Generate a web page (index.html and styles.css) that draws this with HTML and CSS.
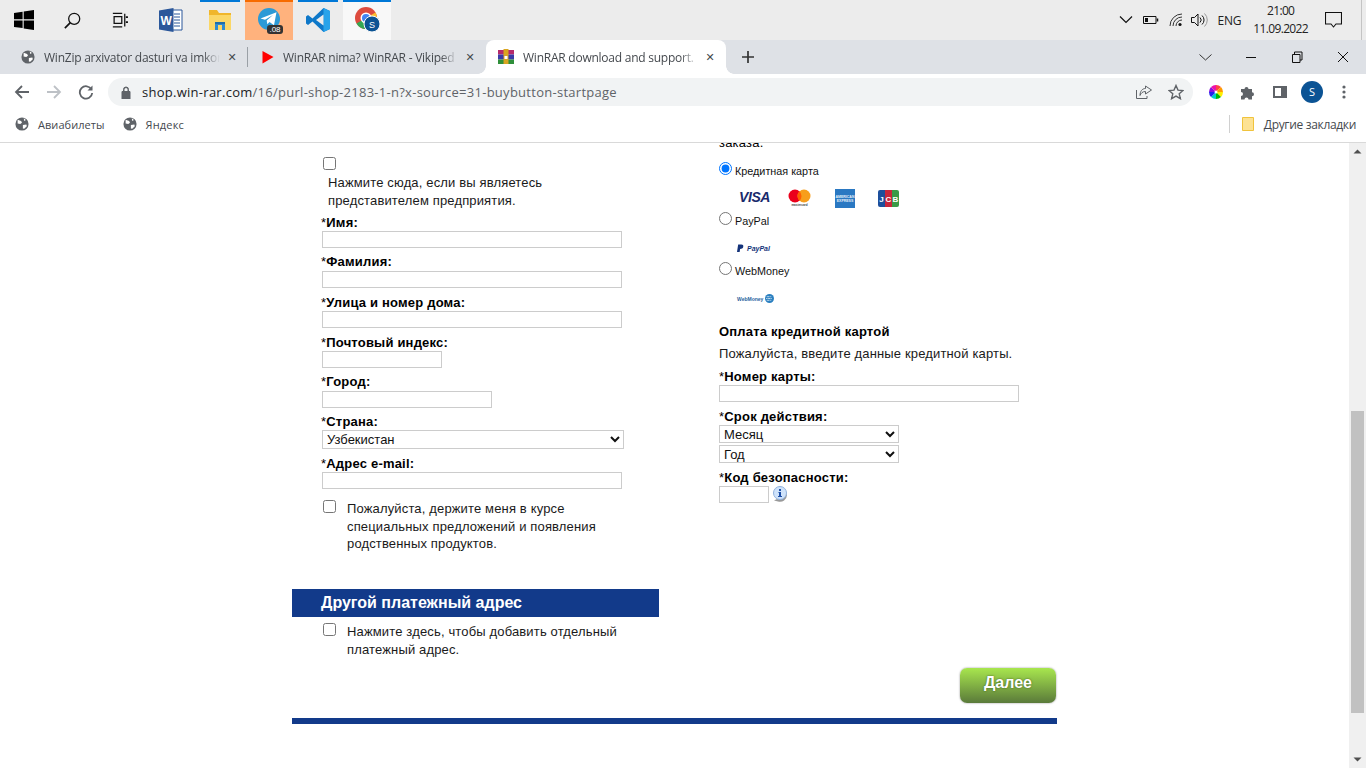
FILE: index.html
```html
<!DOCTYPE html>
<html lang="ru">
<head>
<meta charset="utf-8">
<title>WinRAR download and support</title>
<link rel="stylesheet" href="styles.css">
</head>
<body>
<header class="taskbar">
  <div class="task-item task-sys">
    <svg width="20" height="20" viewBox="0 0 20 20"><path d="M0 3l8.600-1.300v7.600H0zM9.700 1.500L20 0v9.300H9.700zM0 10.400h8.600v7.700L0 17zM9.700 10.400H20V20L9.700 18.400z" fill="#000"/></svg>
  </div>
  <div class="task-item task-sys">
    <svg width="17" height="17" viewBox="0 0 20 20" fill="none" stroke="#111" stroke-width="1.500"><circle cx="12" cy="8" r="6.500"/><path d="M7.500 12.500L1 19" stroke-width="2"/></svg>
  </div>
  <div class="task-item task-sys">
    <svg width="17" height="17" viewBox="0 0 20 20" fill="none" stroke="#111" stroke-width="1.500"><path d="M1 1.500h11M1 17.500h11M2.500 5.500h9v8h-9zM15 2v15"/><path d="M17.500 5v2M17.500 11v2" stroke-width="2.500"/></svg>
  </div>
  <div class="task-item task-word">
    <svg width="26" height="26" viewBox="0 0 26 26"><path d="M9 3h15v20H9z" fill="#fff" stroke="#2b579a"/><path d="M16 7h6M16 10h6M16 13h6M16 16h6M16 19h6" stroke="#2b579a"/><path d="M1 3.500L15.500 1v24L1 22.500z" fill="#2b579a"/><text x="2.600" y="17.500" class="word-letter">W</text></svg>
  </div>
  <div class="task-item task-open">
    <svg width="24" height="22" viewBox="0 0 24 22"><path d="M1 1h8l2 3h12v17H1z" fill="#f0b62b"/><path d="M1 6h22v15H1z" fill="#fbd766"/><path d="M7 13h10v8H7z" fill="#2e8bcf"/><path d="M10 16h4v5h-4z" fill="#fbd766"/><path d="M7 13h10v2H7z" fill="#1f6fa8"/></svg>
  </div>
  <div class="task-item task-alert">
    <svg width="40" height="36" viewBox="0 0 40 36"><circle cx="20" cy="17" r="11" fill="#2c9ad6"/><path d="M11.500 16.500l16-6.300-2.500 13-4.500-3.200-2.200 2.200-.6-3.800 6.300-5.300-8 4.700z" fill="#fff"/></svg>
    <span class="task-badge">.08</span>
  </div>
  <div class="task-item task-open">
    <svg width="26" height="26" viewBox="0 0 26 26"><path d="M18.500 1L25 4v18l-6.500 3-11-10.500L3 18l-2-1.500v-7L3 8l4.500 3.500z" fill="#0e78c9"/><path d="M18.500 1L25 4v18l-6.500 3z" fill="#28a3ea"/><path d="M18.500 7.500v11L11 13z" fill="#ececec"/></svg>
  </div>
  <div class="task-item task-open task-active">
    <svg width="34" height="30" viewBox="0 0 34 30"><circle cx="16" cy="13" r="11" fill="#dd4b3e"/><path d="M16 13L6.500 18.500A11 11 0 0 0 16 24z" fill="#34a853"/><path d="M16 13v11A11 11 0 0 0 25.500 7.500z" fill="#fbc02d"/><circle cx="16" cy="13" r="5.500" fill="#fff"/><circle cx="16" cy="13" r="4" fill="#4285f4"/><circle cx="22" cy="19" r="8" fill="#0b5394" stroke="#f8f8f8"/><text x="22" y="22.500" class="chrome-s">S</text></svg>
  </div>
  <div class="tray">
    <svg width="14" height="10" viewBox="0 0 14 10" fill="none" stroke="#111" stroke-width="1.200"><path d="M1 1.500l6 6 6-6"/></svg>
    <svg class="tray-battery" width="16" height="10" viewBox="0 0 16 10" fill="none" stroke="#111"><path d="M.5 1.500h12.500v7H.5z"/><path d="M2 3h3v4H2z" fill="#111" stroke="none"/><path d="M14.500 3.500v3" stroke-width="1.500"/></svg>
    <svg class="tray-wifi" width="14" height="14" viewBox="0 0 14 14" fill="none" stroke="#333"><path d="M1 13A12 12 0 0 1 13 1M4 13a9 9 0 0 1 9-9M7 13a6 6 0 0 1 6-6"/><circle cx="11" cy="11.500" r="1.600" fill="#111" stroke="none"/></svg>
    <svg class="tray-sound" width="17" height="14" viewBox="0 0 17 14" fill="none" stroke="#111"><path d="M.5 4.500h3L7 1v12L3.500 9.500h-3z"/><path d="M9 4.500a3.500 3.500 0 0 1 0 5M11 2.500a6 6 0 0 1 0 9"/><path d="M13.500 .5a9 9 0 0 1 0 13" stroke="#999"/></svg>
    <span class="tray-lang">ENG</span>
    <div class="clock"><span>21:00</span><span>11.09.2022</span></div>
    <svg class="tray-note" width="17" height="16" viewBox="0 0 17 16" fill="none" stroke="#111" stroke-width="1.100"><path d="M.5 .5h16v11.500h-5.500L8.500 15 6 12H.5z"/></svg>
  </div>
</header>

<nav class="tabstrip">
  <div class="tab">
    <svg class="favicon" width="14" height="14" viewBox="0 0 16 16"><use href="#globe"/></svg>
    <span class="tab-title">WinZip arxivator dasturi va imkor</span>
    <span class="tab-x">✕</span>
  </div>
  <div class="tab-sep"></div>
  <div class="tab tab-second">
    <svg class="favicon" width="12" height="14" viewBox="0 0 12 14"><path d="M.5 1l11 6-11 6.500z" fill="#f00"/></svg>
    <span class="tab-title">WinRAR nima? WinRAR - Vikiped</span>
    <span class="tab-x">✕</span>
  </div>
  <div class="tab tab-current">
    <svg class="favicon" width="16" height="16" viewBox="0 0 16 16"><path d="M0 1h16v4.500H0z" fill="#b52a6b"/><path d="M0 5.500h16v5H0z" fill="#3a3aa8"/><path d="M0 10.500h16V15H0z" fill="#2f8f3a"/><path d="M5.500 0h5v15h-5z" fill="#d9a520"/><path d="M6.500 7h3v3h-3z" fill="#fff"/></svg>
    <span class="tab-title">WinRAR download and support.</span>
    <span class="tab-x">✕</span>
  </div>
  <svg class="tab-plus" width="12" height="12" viewBox="0 0 12 12"><path d="M6 0v12M0 6h12" stroke="#333" stroke-width="1.700"/></svg>
  <div class="winctl">
    <svg width="46" height="12" viewBox="0 0 46 12" fill="none" stroke="#333"><path d="M17.500 3.500l6 5.500 6-5.500"/></svg>
    <svg width="46" height="12" viewBox="0 0 46 12" fill="none" stroke="#111"><path d="M18 6.500h10"/></svg>
    <svg width="46" height="12" viewBox="0 0 46 12" fill="none" stroke="#111"><path d="M18.500 3.500h7.500v8h-7.500zM20.500 3.500v-2.500h7.500v8h-2"/></svg>
    <svg width="46" height="12" viewBox="0 0 46 12" fill="none" stroke="#111"><path d="M18 1l10 10M28 1L18 11"/></svg>
  </div>
</nav>

<div class="toolbar">
  <svg class="tool-btn" width="16" height="16" viewBox="0 0 16 16" fill="none" stroke="#5f6368" stroke-width="1.800"><path d="M15 8H2M8 2L2 8l6 6"/></svg>
  <svg class="tool-btn" width="16" height="16" viewBox="0 0 16 16" fill="none" stroke="#bdc1c6" stroke-width="1.800"><path d="M1 8h13M8 2l6 6-6 6"/></svg>
  <svg class="tool-btn" width="16" height="16" viewBox="0 0 16 16" fill="none" stroke="#5f6368" stroke-width="1.800"><path d="M13.500 5.500A6.200 6.200 0 1 0 14.200 9"/><path d="M14.500 1.500v5h-5z" fill="#5f6368" stroke="none"/></svg>
  <div class="omnibox">
    <svg width="10" height="13" viewBox="0 0 10 13"><path d="M1 5.500h8V13H1z M2.500 5.500V3.500a2.500 2.500 0 0 1 5 0v2" fill="#5f6368" stroke="#5f6368"/><path d="M3.500 5V3.500a1.500 1.500 0 0 1 3 0V5z" fill="#f1f3f4"/></svg>
    <span class="url"><span class="url-host">shop.win-rar.com</span>/16/purl-shop-2183-1-n?x-source=31-buybutton-startpage</span>
    <svg class="omni-share" width="16" height="14" viewBox="0 0 16 14" fill="none" stroke="#5f6368"><path d="M.5 5v8.500h10.500V11"/><path d="M9.500 1l6 4-6 4V6.500C6.500 6.500 5 8 4 10.500 4 6.500 6 3.500 9.500 3.500z"/></svg>
    <svg class="omni-star" width="16" height="16" viewBox="0 0 16 16" fill="none" stroke="#5f6368" stroke-width="1.400"><path d="M8 1.500l2 4.600 5 .4-3.800 3.300 1.200 4.900L8 12.100l-4.400 2.600 1.200-4.900L1 6.500l5-.4z"/></svg>
  </div>
  <div class="extensions">
    <svg width="16" height="16" viewBox="0 0 16 16"><path d="M8 8V1a7 7 0 0 1 5 2z" fill="#f44"/><path d="M8 8l5-5a7 7 0 0 1 2 5z" fill="#f90"/><path d="M8 8h7a7 7 0 0 1-2 5z" fill="#fe0"/><path d="M8 8l5 5a7 7 0 0 1-5 2z" fill="#0b0"/><path d="M8 8v7a7 7 0 0 1-5-2z" fill="#0cc"/><path d="M8 8l-5 5a7 7 0 0 1-2-5z" fill="#22e"/><path d="M8 8H1a7 7 0 0 1 2-5z" fill="#81d"/><path d="M8 8L3 3a7 7 0 0 1 5-2z" fill="#e1a"/><circle cx="8" cy="8" r="1.500" fill="#fff"/></svg>
    <svg width="16" height="16" viewBox="0 0 16 16"><path d="M1 5h3.500a2 2 0 0 1 4 0H12v3.300a2 2 0 0 1 0 4V15.500H8.500a2 2 0 0 0-4 0H1v-3.500a2 2 0 0 0 0-4z" fill="#5f6368"/></svg>
    <svg width="16" height="16" viewBox="0 0 16 16"><path d="M1 2h14v12H1z" fill="#5f6368"/><path d="M3 4h6v8H3z" fill="#fff"/></svg>
    <div class="avatar">S</div>
    <svg width="16" height="16" viewBox="0 0 16 16" fill="#5f6368"><circle cx="8" cy="3" r="1.600"/><circle cx="8" cy="8" r="1.600"/><circle cx="8" cy="13" r="1.600"/></svg>
  </div>
</div>

<div class="bookmarks">
  <svg width="14" height="14" viewBox="0 0 16 16"><use href="#globe"/></svg>
  <span class="bm-text">Авиабилеты</span>
  <svg class="bm-second" width="14" height="14" viewBox="0 0 16 16"><use href="#globe"/></svg>
  <span class="bm-text bm-yandex">Яндекс</span>
  <span class="bm-spacer"></span>
  <span class="bm-sep"></span>
  <svg width="12" height="14" viewBox="0 0 12 14"><path d="M.5 .5h11v13H.5z" fill="#fde293" stroke="#f0c33c"/></svg>
  <span class="bm-text bm-other">Другие закладки</span>
</div>

<svg class="defs" width="0" height="0"><defs>
  <symbol id="globe" viewBox="0 0 16 16"><circle cx="8" cy="8" r="7.500" fill="#5f6368"/><path d="M3 3l4 1.500 1 2-2 1.500-3-.5zM9 9l4-.5.500 2-3 3-1.500-.5zM10 1.500l2.500 2-2 1z" fill="#fff"/></symbol>
</defs></svg>

<div class="viewport">
  <main class="page">
    <div class="sheet">
      <div class="columns">
        <section class="col-left">
          <div class="col-left-body">
            <input type="checkbox" class="check-solo">
            <p class="company-note">Нажмите сюда, если вы являетесь<br>представителем предприятия.</p>
            <div class="field"><label class="lbl">*<b>Имя:</b></label><input type="text" class="inp inp-300"></div>
            <div class="field"><label class="lbl lbl-high">*<b>Фамилия:</b></label><input type="text" class="inp inp-300"></div>
            <div class="field"><label class="lbl">*<b>Улица и номер дома:</b></label><input type="text" class="inp inp-300"></div>
            <div class="field"><label class="lbl">*<b>Почтовый индекс:</b></label><input type="text" class="inp inp-120"></div>
            <div class="field"><label class="lbl lbl-high">*<b>Город:</b></label><input type="text" class="inp inp-170"></div>
            <div class="field field-select"><label class="lbl lbl-high">*<b>Страна:</b></label><select class="sel sel-302"><option>Узбекистан</option></select></div>
            <div class="field"><label class="lbl">*<b>Адрес e-mail:</b></label><input type="text" class="inp inp-300"></div>
            <div class="check-row check-news">
              <input type="checkbox" class="check-box">
              <p class="check-text">Пожалуйста, держите меня в курсе специальных предложений и появления родственных продуктов.</p>
            </div>
          </div>
          <h2 class="band">Другой платежный адрес</h2>
          <div class="col-left-body">
            <div class="check-row check-billing">
              <input type="checkbox" class="check-box">
              <p class="check-text">Нажмите здесь, чтобы добавить отдельный платежный адрес.</p>
            </div>
          </div>
        </section>
        <section class="col-right">
          <p class="clipped">заказа.</p>
          <div class="pay-option pay-card"><input type="radio" name="pay" checked class="radio"><span class="pay-label">Кредитная карта</span></div>
          <div class="logos">
            <span class="logo-visa">VISA</span>
            <svg class="logo-mc" width="23" height="18" viewBox="0 0 23 18"><circle cx="7" cy="7" r="6.500" fill="#eb001b"/><circle cx="16" cy="7" r="6.500" fill="#f79e1b"/><path d="M11.500 2.300a6.500 6.500 0 0 1 0 9.400 6.500 6.500 0 0 1 0-9.400z" fill="#ff5f00"/><text x="11.500" y="17" class="mc-text">mastercard</text></svg>
            <svg class="logo-amex" width="20" height="19" viewBox="0 0 20 19"><path d="M0 0h20v19H0z" fill="#2a78c2"/><text x="10" y="8.500" class="amex-text">AMERICAN</text><text x="10" y="13" class="amex-text">EXPRESS</text></svg>
            <svg class="logo-jcb" width="21" height="17" viewBox="0 0 21 17"><path d="M0 2a2 2 0 0 1 2-2h5v17H2a2 2 0 0 1-2-2z" fill="#1d4f9c"/><path d="M7 0h7v17H7z" fill="#c8263b"/><path d="M14 0h5a2 2 0 0 1 2 2v13a2 2 0 0 1-2 2h-5z" fill="#3a9a46"/><text x="3.500" y="11.500" class="jcb-text">J</text><text x="10.500" y="11.500" class="jcb-text">C</text><text x="17.500" y="11.500" class="jcb-text">B</text></svg>
          </div>
          <div class="pay-option"><input type="radio" name="pay" class="radio"><span class="pay-label">PayPal</span></div>
          <div class="logo-row"><svg width="7" height="9" viewBox="0 0 9 10"><path d="M1.500 0h4a2.500 2.500 0 0 1 2.500 3C7.500 5 6 5.500 4 5.500L3.400 9.500H0z" fill="#14337a"/></svg><span class="logo-paypal">PayPal</span></div>
          <div class="pay-option"><input type="radio" name="pay" class="radio"><span class="pay-label">WebMoney</span></div>
          <div class="logo-row"><span class="logo-wm">WebMoney</span><svg width="9" height="9" viewBox="0 0 10 10"><circle cx="5" cy="5" r="5" fill="#2a7fc0"/><path d="M2 3h5M1.500 5h6M2 7h5" stroke="#fff" stroke-dasharray="1 .6"/></svg></div>
          <h3 class="pay-title">Оплата кредитной картой</h3>
          <p class="pay-hint">Пожалуйста, введите данные кредитной карты.</p>
          <div class="field"><label class="lbl">*<b>Номер карты:</b></label><input type="text" class="inp inp-300"></div>
          <div class="field"><label class="lbl">*<b>Срок действия:</b></label><select class="sel sel-180"><option>Месяц</option></select><select class="sel sel-180"><option>Год</option></select></div>
          <div class="field"><label class="lbl">*<b>Код безопасности:</b></label>
            <div class="cvv"><input type="text" class="inp inp-50">
              <svg width="16" height="16" viewBox="0 0 16 16"><path d="M2 14.500L5 13a7 7 0 0 0 9-6l1 2a7 7 0 0 1-9 6.500z" fill="#999"/><circle cx="8" cy="7" r="6.500" fill="#cfe3fb" stroke="#8fb0dc"/><path d="M7 3h2v2H7zM6.500 6H9v4h1v1H6v-1h1V7h-.5z" fill="#1d4fa8"/></svg>
            </div>
          </div>
        </section>
      </div>
      <div class="actions"><button type="button" class="next-btn">Далее</button></div>
      <div class="rule"></div>
    </div>
  </main>
  <aside class="scrollbar">
    <svg class="sb-arrow" width="17" height="17" viewBox="0 0 17 17"><path d="M4.500 10.500l4-4 4 4z" fill="#505050"/></svg>
    <div class="sb-track"><div class="sb-thumb"></div></div>
    <svg class="sb-arrow" width="17" height="17" viewBox="0 0 17 17"><path d="M4.500 6.500l4 4 4-4z" fill="#505050"/></svg>
  </aside>
</div>
</body>
</html>
```
FILE: styles.css
```css
* { box-sizing: border-box; }
html, body { margin: 0; height: 768px; overflow: hidden; }
body { width: 1366px; display: flex; flex-direction: column; background: #fff; font-family: "Liberation Sans", Arial, sans-serif; color: #000; }
p, h2, h3 { margin: 0; }
.defs { position: absolute; }

/* Taskbar */
.taskbar { height: 40px; flex: none; display: flex; align-items: stretch; background: #ececec; font-family: "Open Sans", sans-serif; }
.task-item { width: 48px; display: flex; align-items: center; justify-content: center; position: relative; }
.task-item + .task-item { margin-left: 1px; }
.task-sys + .task-sys { margin-left: 0; }
.task-word { margin-left: 3px !important; }
.task-open::before, .task-alert::before { content: ""; position: absolute; top: 0; left: 4px; right: 4px; height: 2px; background: #0078d7; }
.task-alert { background: #ffb27d; }
.task-alert::before { left: 0; right: 0; background: #f76b00; }
.task-active { background: #f8f8f8; }
.task-active::before { left: 0; right: 0; }
.task-badge { position: absolute; left: 22px; top: 25px; width: 16px; height: 9px; border-radius: 3px; background: #333; color: #fff; font: 8px/9px "Liberation Sans", sans-serif; text-align: center; }
.word-letter { font: bold 12px "Liberation Sans", sans-serif; fill: #fff; }
.chrome-s { font: 9px "Liberation Sans", sans-serif; fill: #fff; text-anchor: middle; }
.tray { margin-left: auto; display: flex; align-items: center; padding-right: 19px; border-right: 1px solid #c4c4c4; margin-right: 4px; }
.tray-battery { margin-left: 10px; }
.tray-wifi { margin-left: 10px; }
.tray-sound { margin-left: 8px; }
.tray-lang { font-size: 12px; color: #222; margin-left: 9px; letter-spacing: -.2px; }
.clock { display: flex; flex-direction: column; align-items: center; font-size: 12px; line-height: 18px; color: #222; margin-left: 12px; letter-spacing: -.65px; }
.tray-note { margin-left: 17px; }

/* Tabs */
.tabstrip { height: 34px; flex: none; display: flex; align-items: center; background: #dee1e6; font-family: "Open Sans", sans-serif; }
.tab { height: 34px; display: flex; align-items: center; width: 248px; padding-left: 21px; flex: none; }
.tab-second { width: 238px; padding-left: 14px; }
.tab-current { width: 240px; background: #fff; border-radius: 8px 8px 0 0; padding-left: 12px; position: relative; }
.tab-current::before, .tab-current::after { content: ""; position: absolute; bottom: 0; width: 8px; height: 8px; }
.tab-current::before { left: -8px; background: radial-gradient(circle at 0 0, transparent 7.500px, #fff 8px); }
.tab-current::after { right: -8px; background: radial-gradient(circle at 100% 0, transparent 7.500px, #fff 8px); }
.tab-sep { width: 1px; height: 20px; background: #9aa0a6; margin-left: -1px; flex: none; }
.favicon { flex: none; margin-right: 9px; }
.tab-title { font-size: 12px; letter-spacing: -.24px; color: #45494e; white-space: nowrap; overflow: hidden; flex: 1; -webkit-mask-image: linear-gradient(90deg, #000 90%, transparent 100%); mask-image: linear-gradient(90deg, #000 90%, transparent 100%); }
.tab-x { flex: none; width: 24px; margin-right: 4px; text-align: center; font-size: 11px; font-family: "DejaVu Sans", sans-serif; font-weight: bold; color: #45494e; }
.tab-plus { margin-left: 16px; flex: none; }
.winctl { margin-left: auto; display: flex; }

/* Toolbar */
.toolbar { height: 36px; flex: none; display: flex; align-items: center; background: #fff; padding-left: 14px; }
.tool-btn { margin-right: 16px; flex: none; }
.toolbar .tool-btn:nth-child(3) { margin-right: 14px; }
.omnibox { width: 1085px; height: 28px; border-radius: 14px; background: #f1f3f4; display: flex; align-items: center; padding-left: 13px; padding-right: 9px; }
.url { margin-left: 11px; font: 13px "Open Sans", sans-serif; letter-spacing: .27px; color: #5f6368; white-space: nowrap; flex: 1; }
.url-host { color: #202124; }
.omni-share { margin-right: 16px; }
.extensions { display: flex; align-items: center; gap: 16px; margin-left: 15px; }
.avatar { width: 22px; height: 22px; margin: 0 -3px; border-radius: 50%; background: #0b5394; color: #fff; font: 11px/22px "Open Sans", sans-serif; text-align: center; }

/* Bookmarks */
.bookmarks { height: 33px; flex: none; display: flex; align-items: center; padding: 0 10px 4px 15px; border-bottom: 1px solid #d9d9d9; font-family: "Open Sans", sans-serif; }
.bm-text { font-size: 11px; letter-spacing: .05px; color: #45494e; margin-left: 9px; }
.bm-second { margin-left: 18px; }
.bm-yandex { letter-spacing: .2px; }
.bm-spacer { flex: 1; }
.bm-sep { width: 1px; height: 18px; background: #d0d0d0; margin-right: 12px; }
.bm-other { font-size: 12px; margin-left: 10px; letter-spacing: -.33px; }

/* Page */
.viewport { flex: 1; display: flex; min-height: 0; }
.page { flex: 1; min-width: 0; overflow: hidden; }
.sheet { width: 765px; margin: -7px 0 0 292px; }
.columns { display: grid; grid-template-columns: 367px 1fr; column-gap: 60px; }
.col-left-body { padding-left: 30px; }
.check-solo { display: block; margin: 21px 0 0 1px; width: 13px; height: 13px; }
.company-note { margin: 4px 0 5px 6px; font-size: 13px; line-height: 17.500px; letter-spacing: .15px; color: #1a1a1a; }
.field { margin-bottom: 6px; }
.field-select .lbl { height: 16px; }
.lbl { display: block; height: 17px; font-size: 13px; line-height: 17px; letter-spacing: .2px; }
.lbl-high { line-height: 16px; }
.col-left .lbl { margin-left: -1px; }
.lbl b { font-weight: bold; }
.inp { display: block; height: 17px; border: 1px solid #ccc; background: #fff; padding: 0; margin: 0; }
.inp-300 { width: 300px; }
.inp-120 { width: 120px; }
.inp-170 { width: 170px; }
.inp-50 { width: 50px; }
.sel { display: block; height: 19px; margin: 0; border: 1px solid #ccc; background: #fff; font: 13px "Liberation Sans", sans-serif; padding: 0; color: #111; }
.sel-302 { width: 302px; }
.sel-180 { width: 180px; height: 18px; margin-bottom: 2px; }
.check-row { display: flex; }
.check-box { flex: none; width: 13px; height: 13px; margin: 0 11px 0 1px; }
.check-text { width: 280px; font-size: 13px; line-height: 17.500px; letter-spacing: .15px; color: #1a1a1a; }
.check-news { margin-top: 11px; height: 89px; }
.band { height: 28px; background: #123a8a; color: #fff; font-size: 16px; line-height: 28px; padding-left: 29px; }
.check-billing { margin-top: 6px; }

.clipped { font-size: 13px; line-height: 18px; letter-spacing: .2px; margin-top: -2px; }
.pay-option { display: flex; align-items: flex-start; height: 27px; }
.pay-card { margin-top: 10px; }
.radio { width: 13px; height: 13px; margin: 0 3px 0 0; flex: none; }
.pay-label { font-size: 10.800px; line-height: 13px; margin-top: 3px; color: #111; }
.logos { height: 23px; display: flex; align-items: flex-start; }
.logo-visa { margin-left: 20px; width: 32px; font: italic bold 14px/17px "Liberation Sans", sans-serif; letter-spacing: -.4px; color: #1a2a6c; }
.logo-mc { margin-left: 17px; }
.logo-amex { margin-left: 24px; }
.logo-jcb { margin-left: 23px; margin-top: 1px; }
.mc-text { font: bold 3px "Liberation Sans", sans-serif; fill: #444; text-anchor: middle; }
.amex-text { font: bold 3.500px "Liberation Sans", sans-serif; fill: #e6f0fa; text-anchor: middle; }
.jcb-text { font: bold 8px "Liberation Sans", sans-serif; fill: #fff; text-anchor: middle; }
.logo-row { height: 23px; display: flex; align-items: flex-start; padding: 5px 0 0 18px; gap: 1px; }
.logo-paypal { font: italic bold 7px/10px "Liberation Sans", sans-serif; color: #14337a; margin-left: 2px; }
.logo-wm { font: bold 5px/10px "Liberation Sans", sans-serif; color: #2a5f9e; margin-right: 1px; }
.pay-title { margin-top: 11px; font-size: 13px; line-height: 18px; letter-spacing: .2px; }
.pay-hint { margin: 4px 0 5px; font-size: 13px; line-height: 18px; letter-spacing: .15px; color: #1a1a1a; }
.cvv { display: flex; align-items: flex-start; gap: 3px; }

.actions { display: flex; justify-content: flex-end; padding-right: 1px; margin-top: 10px; }
.next-btn { width: 96px; height: 35px; border: 0; border-radius: 7px; background: linear-gradient(#a8e64e, #5a7a3a); box-shadow: 0 0 2px #888; color: #fff; font: bold 16px "Liberation Sans", sans-serif; text-shadow: 0 0 2px #3a5a1a; padding: 0 0 6px; }
.rule { height: 6px; background: #123a8a; margin-top: 15px; }

/* Scrollbar */
.scrollbar { width: 17px; flex: none; background: #f0f0f0; display: flex; flex-direction: column; }
.sb-arrow { flex: none; }
.sb-track { flex: 1; padding: 251px 2px 0; }
.sb-thumb { height: 302px; background: #c1c1c1; }
```
